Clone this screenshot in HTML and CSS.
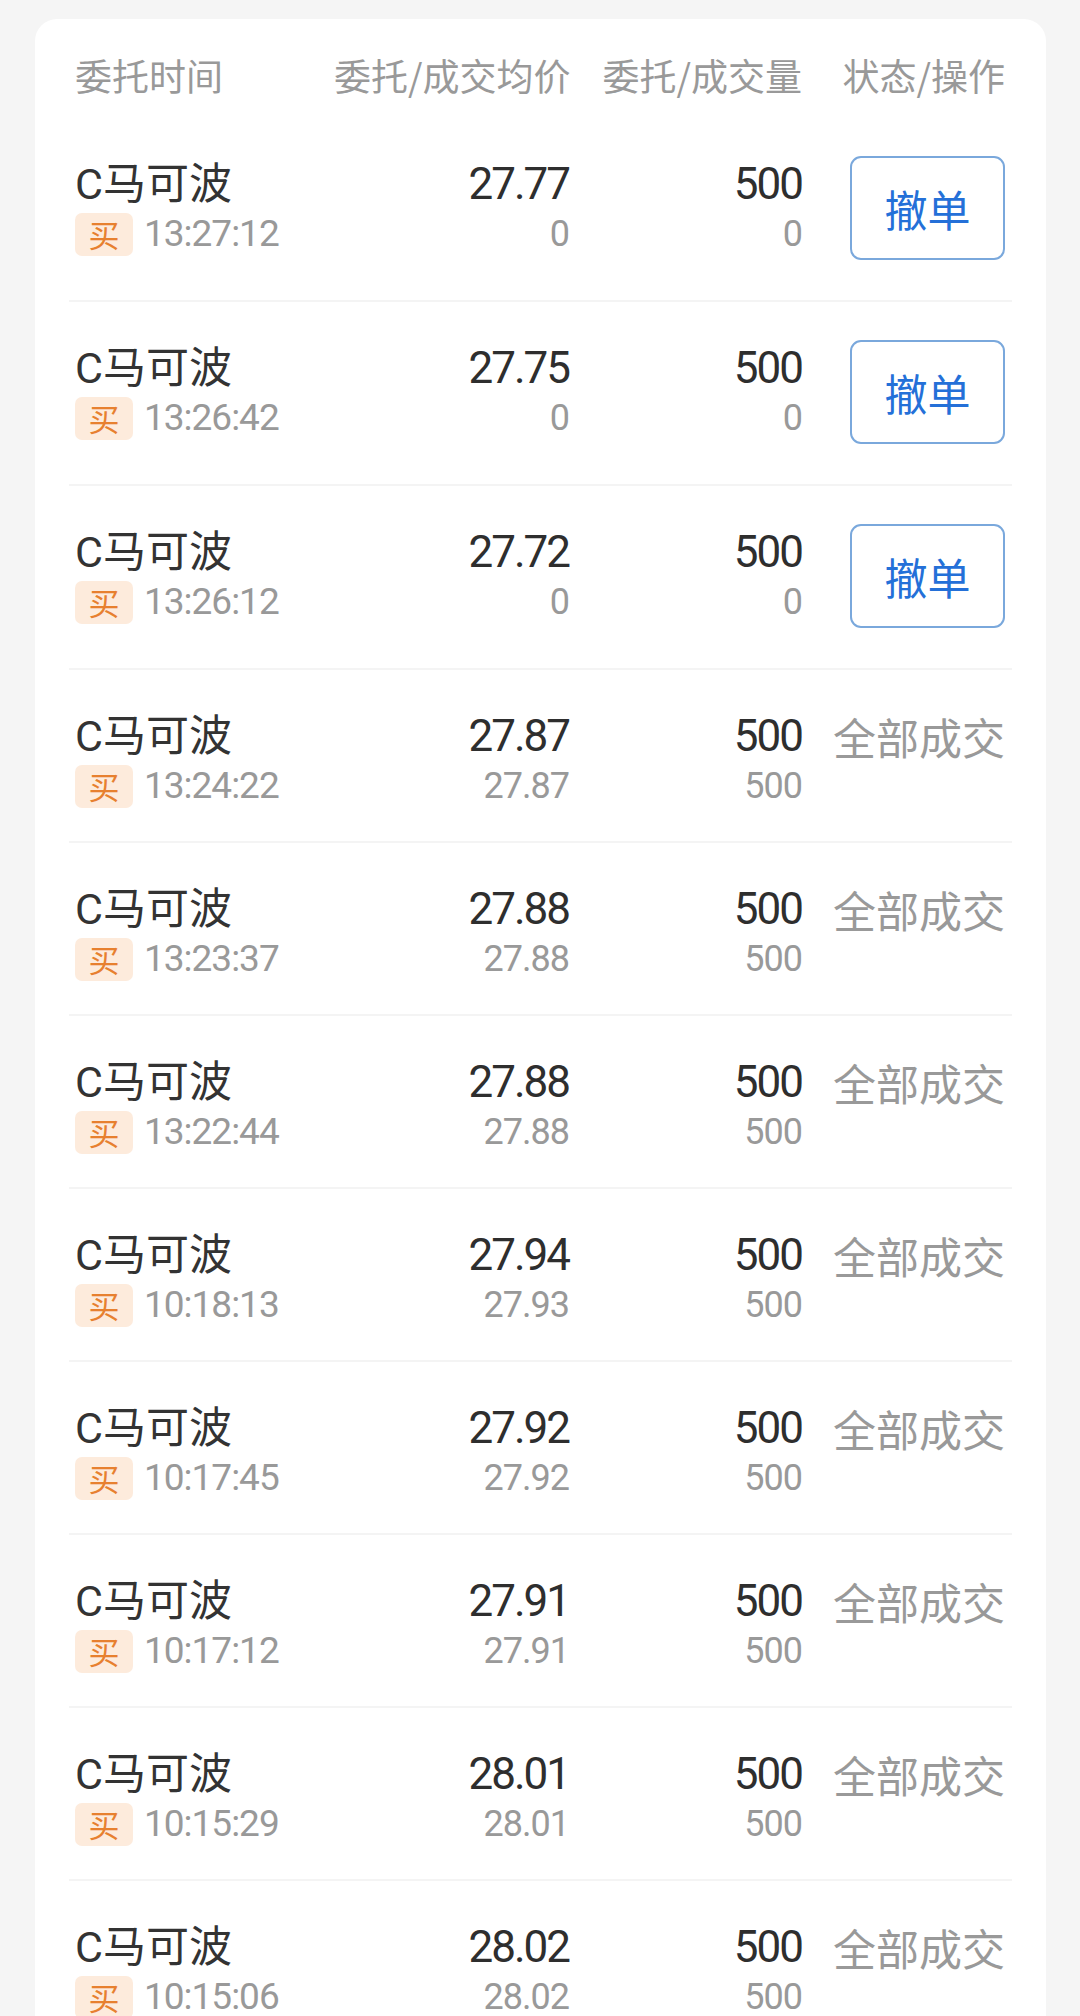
FILE: index.html
```html
<html lang="zh-CN">
<head>
  <meta charset="UTF-8" />
  <meta name="viewport" content="width=device-width, initial-scale=1.0" />
  <title>委托</title>
  <link rel="stylesheet" href="styles.css">
</head>
<body>
  <div class="card">
    <div class="thead">
      <span>委托时间</span>
      <span class="r">委托/成交均价</span>
      <span class="r">委托/成交量</span>
      <span class="r">状态/操作</span>
    </div>

    <div class="row">
      <div class="cell">
        <div class="l1 name">C马可波</div>
        <div class="l2"><span class="tag">买</span><span class="time">13:27:12</span></div>
      </div>
      <div class="cell num"><div class="l1">27.77</div><div class="l2">0</div></div>
      <div class="cell num"><div class="l1">500</div><div class="l2">0</div></div>
      <div class="cell act"><button class="btn-cancel">撤单</button></div>
    </div>

    <div class="row">
      <div class="cell">
        <div class="l1 name">C马可波</div>
        <div class="l2"><span class="tag">买</span><span class="time">13:26:42</span></div>
      </div>
      <div class="cell num"><div class="l1">27.75</div><div class="l2">0</div></div>
      <div class="cell num"><div class="l1">500</div><div class="l2">0</div></div>
      <div class="cell act"><button class="btn-cancel">撤单</button></div>
    </div>

    <div class="row">
      <div class="cell">
        <div class="l1 name">C马可波</div>
        <div class="l2"><span class="tag">买</span><span class="time">13:26:12</span></div>
      </div>
      <div class="cell num"><div class="l1">27.72</div><div class="l2">0</div></div>
      <div class="cell num"><div class="l1">500</div><div class="l2">0</div></div>
      <div class="cell act"><button class="btn-cancel">撤单</button></div>
    </div>

    <div class="row">
      <div class="cell">
        <div class="l1 name">C马可波</div>
        <div class="l2"><span class="tag">买</span><span class="time">13:24:22</span></div>
      </div>
      <div class="cell num"><div class="l1">27.87</div><div class="l2">27.87</div></div>
      <div class="cell num"><div class="l1">500</div><div class="l2">500</div></div>
      <div class="cell act"><div class="l1 status">全部成交</div></div>
    </div>

    <div class="row">
      <div class="cell">
        <div class="l1 name">C马可波</div>
        <div class="l2"><span class="tag">买</span><span class="time">13:23:37</span></div>
      </div>
      <div class="cell num"><div class="l1">27.88</div><div class="l2">27.88</div></div>
      <div class="cell num"><div class="l1">500</div><div class="l2">500</div></div>
      <div class="cell act"><div class="l1 status">全部成交</div></div>
    </div>

    <div class="row">
      <div class="cell">
        <div class="l1 name">C马可波</div>
        <div class="l2"><span class="tag">买</span><span class="time">13:22:44</span></div>
      </div>
      <div class="cell num"><div class="l1">27.88</div><div class="l2">27.88</div></div>
      <div class="cell num"><div class="l1">500</div><div class="l2">500</div></div>
      <div class="cell act"><div class="l1 status">全部成交</div></div>
    </div>

    <div class="row">
      <div class="cell">
        <div class="l1 name">C马可波</div>
        <div class="l2"><span class="tag">买</span><span class="time">10:18:13</span></div>
      </div>
      <div class="cell num"><div class="l1">27.94</div><div class="l2">27.93</div></div>
      <div class="cell num"><div class="l1">500</div><div class="l2">500</div></div>
      <div class="cell act"><div class="l1 status">全部成交</div></div>
    </div>

    <div class="row">
      <div class="cell">
        <div class="l1 name">C马可波</div>
        <div class="l2"><span class="tag">买</span><span class="time">10:17:45</span></div>
      </div>
      <div class="cell num"><div class="l1">27.92</div><div class="l2">27.92</div></div>
      <div class="cell num"><div class="l1">500</div><div class="l2">500</div></div>
      <div class="cell act"><div class="l1 status">全部成交</div></div>
    </div>

    <div class="row">
      <div class="cell">
        <div class="l1 name">C马可波</div>
        <div class="l2"><span class="tag">买</span><span class="time">10:17:12</span></div>
      </div>
      <div class="cell num"><div class="l1">27.91</div><div class="l2">27.91</div></div>
      <div class="cell num"><div class="l1">500</div><div class="l2">500</div></div>
      <div class="cell act"><div class="l1 status">全部成交</div></div>
    </div>

    <div class="row">
      <div class="cell">
        <div class="l1 name">C马可波</div>
        <div class="l2"><span class="tag">买</span><span class="time">10:15:29</span></div>
      </div>
      <div class="cell num"><div class="l1">28.01</div><div class="l2">28.01</div></div>
      <div class="cell num"><div class="l1">500</div><div class="l2">500</div></div>
      <div class="cell act"><div class="l1 status">全部成交</div></div>
    </div>

    <div class="row">
      <div class="cell">
        <div class="l1 name">C马可波</div>
        <div class="l2"><span class="tag">买</span><span class="time">10:15:06</span></div>
      </div>
      <div class="cell num"><div class="l1">28.02</div><div class="l2">28.02</div></div>
      <div class="cell num"><div class="l1">500</div><div class="l2">500</div></div>
      <div class="cell act"><div class="l1 status">全部成交</div></div>
    </div>
  </div>
</body>
</html>
```

FILE: styles.css
```css
* {
  box-sizing: border-box;
}

body {
  margin: 0;
  padding: 19px 0 0;
  background-color: #f5f5f5;
  font-family: Roboto, "Noto Sans CJK SC", sans-serif;
  color: #333;
  height: 2016px;
  overflow: hidden;
}

.card {
  margin: 0 34px 0 35px;
  padding: 0 34px;
  background: #fff;
  border-radius: 22px 22px 0 0;
  min-height: 2100px;
}

.thead,
.row {
  display: grid;
  grid-template-columns: 259px 235px 233px 1fr;
  padding-left: 6px;
  padding-right: 7px;
}

.thead {
  padding-top: 38px;
  padding-bottom: 24px;
  font-size: 37px;
  line-height: 37px;
  color: #999;
  white-space: nowrap;
  font-family: "Noto Sans CJK SC", sans-serif;
}

.thead .r {
  text-align: right;
}

.row {
  padding-top: 38px;
  padding-bottom: 33px;
  border-bottom: 2px solid #f4f4f4;
}

.cell {
  display: flex;
  flex-direction: column;
}

.l1 {
  height: 56px;
  line-height: 56px;
  white-space: nowrap;
}

.l2 {
  height: 44px;
  line-height: 44px;
  display: flex;
  align-items: center;
  white-space: nowrap;
}

.name {
  font-size: 43px;
  color: #333;
}

.tag {
  display: inline-flex;
  justify-content: center;
  align-items: center;
  width: 58px;
  height: 43px;
  border-radius: 7px;
  background: #fdebdc;
  color: #e7802f;
  font-size: 31px;
  font-family: "Noto Sans CJK SC", sans-serif;
}

.time {
  margin-left: 11px;
  font-size: 37px;
  letter-spacing: -1px;
  color: #999;
}

.num {
  align-items: flex-end;
}

.num .l1 {
  font-size: 44px;
  letter-spacing: -2px;
  color: #2e2e2e;
}

.num .l2 {
  font-size: 36px;
  letter-spacing: -1px;
  color: #999;
}

.act {
  align-items: flex-end;
}

.status {
  font-size: 43px;
  color: #999;
  font-family: "Noto Sans CJK SC", sans-serif;
}

.btn-cancel {
  width: 155px;
  height: 104px;
  margin-bottom: 7px;
  padding: 0;
  border: 2px solid #7aa8dc;
  border-radius: 11px;
  background: #fff;
  color: #2470d8;
  font-size: 43px;
  font-family: "Noto Sans CJK SC", sans-serif;
}
```
